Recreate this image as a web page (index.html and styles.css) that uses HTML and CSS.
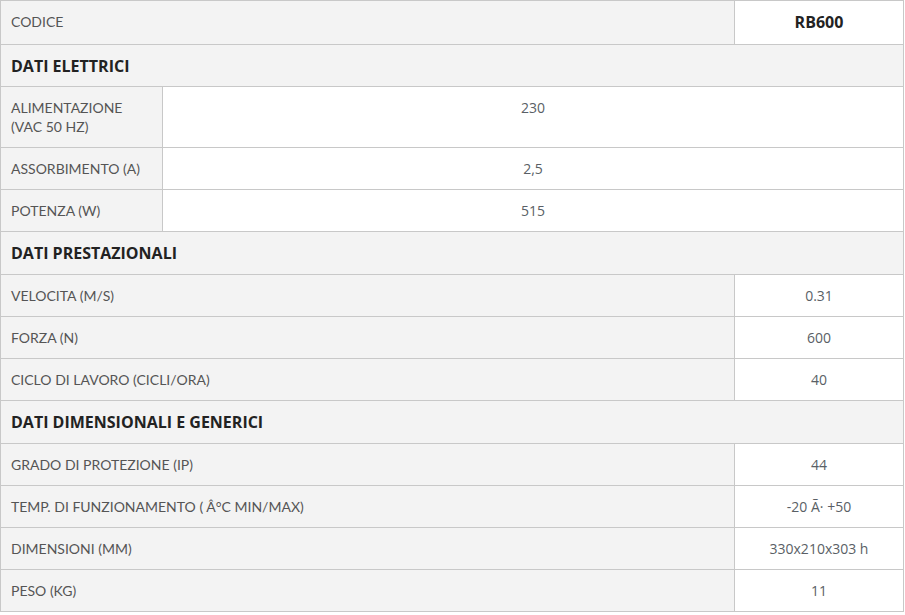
FILE: index.html
```html
<!DOCTYPE html>
<html lang="it">
<head>
<meta charset="utf-8">
<link rel="stylesheet" href="styles.css">
</head>
<body>
<table class="specs">
  <colgroup>
    <col class="c1"><col class="c2"><col class="c3">
  </colgroup>
  <tr class="top">
    <td class="label" colspan="2">CODICE</td>
    <td class="value code">RB600</td>
  </tr>
  <tr class="section first"><th colspan="3">DATI ELETTRICI</th></tr>
  <tr>
    <td class="label">ALIMENTAZIONE<br>(VAC 50 HZ)</td>
    <td class="value" colspan="2">230</td>
  </tr>
  <tr>
    <td class="label">ASSORBIMENTO (A)</td>
    <td class="value" colspan="2">2,5</td>
  </tr>
  <tr>
    <td class="label">POTENZA (W)</td>
    <td class="value" colspan="2">515</td>
  </tr>
  <tr class="section"><th colspan="3">DATI PRESTAZIONALI</th></tr>
  <tr>
    <td class="label" colspan="2">VELOCITA (M/S)</td>
    <td class="value">0.31</td>
  </tr>
  <tr>
    <td class="label" colspan="2">FORZA (N)</td>
    <td class="value">600</td>
  </tr>
  <tr>
    <td class="label" colspan="2">CICLO DI LAVORO (CICLI/ORA)</td>
    <td class="value">40</td>
  </tr>
  <tr class="section"><th colspan="3">DATI DIMENSIONALI E GENERICI</th></tr>
  <tr>
    <td class="label" colspan="2">GRADO DI PROTEZIONE (IP)</td>
    <td class="value">44</td>
  </tr>
  <tr>
    <td class="label" colspan="2">TEMP. DI FUNZIONAMENTO ( Â°C MIN/MAX)</td>
    <td class="value">-20 Ã· +50</td>
  </tr>
  <tr>
    <td class="label" colspan="2">DIMENSIONI (MM)</td>
    <td class="value">330x210x303 h</td>
  </tr>
  <tr>
    <td class="label" colspan="2">PESO (KG)</td>
    <td class="value">11</td>
  </tr>
</table>
</body>
</html>
```
FILE: styles.css
```css
html, body {
  margin: 0;
  padding: 0;
  background: #fff;
}
.specs {
  border-collapse: collapse;
  width: 903px;
  table-layout: fixed;
}
.c1 { width: 162px; }
.c2 { width: 572px; }
.c3 { width: 169px; }
.specs td, .specs th {
  border: 1px solid #c8c8c8;
  padding: 11px 10px;
  line-height: 19px;
  height: 19px;
  vertical-align: top;
}
.label {
  background: #f3f3f3;
  font-family: Lato, "Liberation Sans", sans-serif;
  font-size: 14px;
  color: #555;
  text-align: left;
}
.value {
  background: #fff;
  font-family: "Open Sans", "Liberation Sans", sans-serif;
  font-size: 14px;
  color: #5a5f66;
  text-align: center;
}
.specs .top td {
  height: 22px;
  line-height: 22px;
  padding: 10px 10px 11px;
  vertical-align: middle;
}
.value.code {
  font-weight: 700;
  font-size: 16px;
  color: #222;
}
.specs .section th {
  background: #f3f3f3;
  font-family: "Open Sans", "Liberation Sans", sans-serif;
  font-size: 16px;
  font-weight: 700;
  color: #222;
  text-align: left;
  height: 22px;
  line-height: 22px;
  padding: 10px 10px;
  vertical-align: middle;
}
.specs .section.first th {
  padding: 10px 10px 9px;
}
```
